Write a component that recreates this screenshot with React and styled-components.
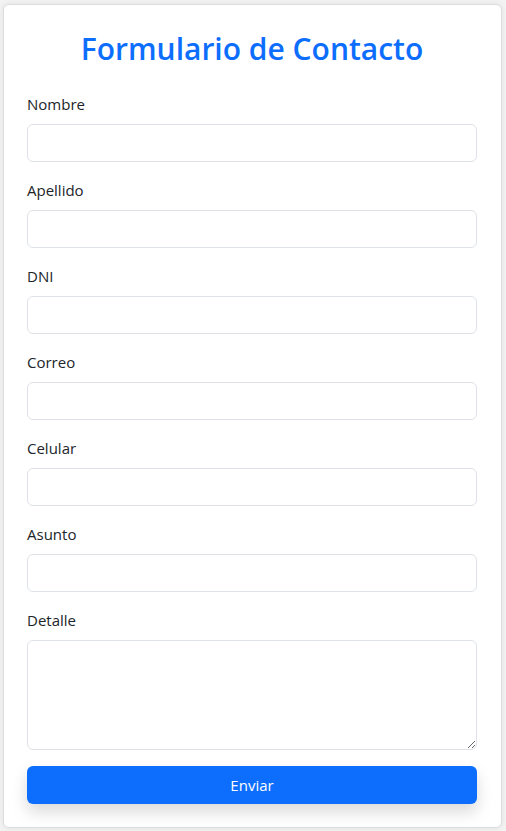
import React from "react";
import styled, { createGlobalStyle } from "styled-components";

const Global = createGlobalStyle`
  * { box-sizing: border-box; }
  html, body { margin: 0; padding: 0; }
  body {
    background: #f3f3f4;
    font-family: "Open Sans", "Noto Sans", sans-serif;
    color: #212529;
    font-size: 16px;
    line-height: 1.5;
  }
`;

const Page = styled.div`
  padding: 4px 4px 3px 3px;
`;

const Card = styled.form`
  background: #fff;
  border: 1px solid #dcdde0;
  border-radius: 6px;
  box-shadow: 0 0 6px rgba(0, 0, 0, 0.08);
  padding: 23px 24px 23px 23px;
  display: flex;
  flex-direction: column;
`;

const Title = styled.h2`
  margin: 0 0 24px;
  padding-top: 2px;
  text-align: center;
  color: #0d6efd;
  font-size: 30px;
  font-weight: 600;
  line-height: 38px;
`;

const Group = styled.div`
  display: flex;
  flex-direction: column;
  margin-bottom: 16px;
`;

const Label = styled.label`
  font-size: 15px;
  line-height: 24px;
  margin-bottom: 8px;
  color: #212529;
`;

const Input = styled.input`
  display: block;
  width: 100%;
  height: 38px;
  padding: 6px 12px;
  font: inherit;
  border: 1px solid #dee2e6;
  border-radius: 6px;
  background: #fff;
  outline: none;
`;

const TextArea = styled.textarea`
  display: block;
  width: 100%;
  height: 110px;
  padding: 6px 12px;
  font: inherit;
  border: 1px solid #dee2e6;
  border-radius: 6px;
  background: #fff;
  resize: vertical;
  outline: none;
`;

const Button = styled.button`
  display: block;
  width: 100%;
  height: 38px;
  border: none;
  border-radius: 6px;
  background: #0d6efd;
  color: #fff;
  font-family: inherit;
  font-size: 15px;
  box-shadow: 0 8px 16px rgba(0, 0, 0, 0.15);
  cursor: pointer;
`;

const fields = ["Nombre", "Apellido", "DNI", "Correo", "Celular", "Asunto"];

export default function App() {
  return (
    <>
      <Global />
      <Page>
        <Card onSubmit={(e) => e.preventDefault()}>
          <Title>Formulario de Contacto</Title>
          {fields.map((f) => (
            <Group key={f}>
              <Label>{f}</Label>
              <Input type="text" />
            </Group>
          ))}
          <Group>
            <Label>Detalle</Label>
            <TextArea rows={4} />
          </Group>
          <Button type="submit">Enviar</Button>
        </Card>
      </Page>
    </>
  );
}
